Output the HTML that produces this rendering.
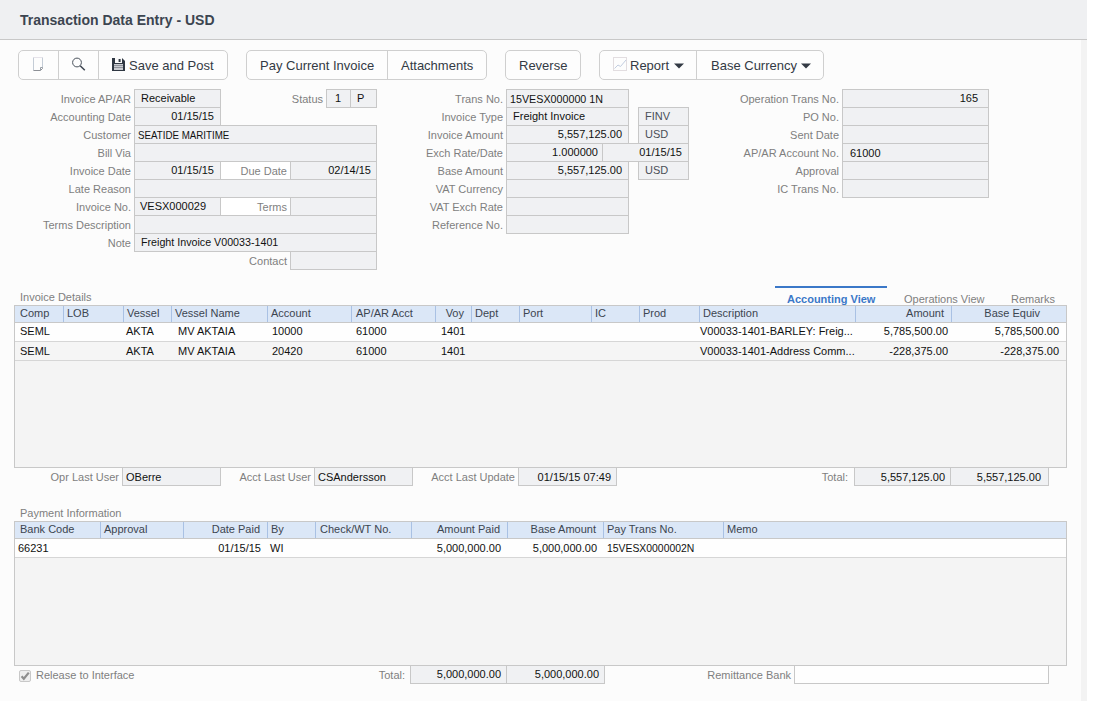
<!DOCTYPE html>
<html><head><meta charset="utf-8"><style>
html,body{margin:0;padding:0;}
body{width:1093px;height:701px;position:relative;overflow:hidden;background:#fcfcfc;font-family:"Liberation Sans",sans-serif;}
.b{position:absolute;box-sizing:border-box;border:1px solid #c8c8c8;}
.t{position:absolute;white-space:nowrap;line-height:17px;height:17px;}
.btn{position:absolute;box-sizing:border-box;border:1px solid #cfcfcf;border-radius:5px;background:#fdfdfd;}
</style></head><body>
<div style="position:absolute;left:0;top:0;width:1087px;height:39px;background:#eff0f2;"></div>
<div style="position:absolute;left:0;top:39px;width:1087px;height:1px;background:#c8c8c8;"></div>
<div style="position:absolute;left:1081px;top:40px;width:6px;height:661px;background:#f3f3f3;"></div>
<div style="position:absolute;left:1087px;top:0px;width:6px;height:701px;background:#ffffff;"></div>
<div class="t" style="left:20px;top:12px;color:#3c4550;font-size:14px;font-weight:bold;">Transaction Data Entry - USD</div>
<div class="btn" style="left:18px;top:50px;width:210px;height:30px;"></div>
<div style="position:absolute;left:58px;top:51px;width:1px;height:28px;background:#cfcfcf"></div>
<div style="position:absolute;left:98px;top:51px;width:1px;height:28px;background:#cfcfcf"></div>
<div class="btn" style="left:246px;top:50px;width:241px;height:30px;"></div>
<div style="position:absolute;left:387px;top:51px;width:1px;height:28px;background:#cfcfcf"></div>
<div class="btn" style="left:505px;top:50px;width:76px;height:30px;"></div>
<div class="btn" style="left:599px;top:50px;width:225px;height:30px;"></div>
<div style="position:absolute;left:696px;top:51px;width:1px;height:28px;background:#cfcfcf"></div>
<div class="t" style="left:129px;top:57px;color:#333a44;font-size:13px;">Save and Post</div>
<div class="t" style="left:260px;top:57px;color:#333a44;font-size:13px;">Pay Current Invoice</div>
<div class="t" style="left:401px;top:57px;color:#333a44;font-size:13px;">Attachments</div>
<div class="t" style="left:519px;top:57px;color:#333a44;font-size:13px;">Reverse</div>
<div class="t" style="left:630px;top:57px;color:#333a44;font-size:13px;">Report</div>
<div class="t" style="left:711px;top:57px;color:#333a44;font-size:13px;">Base Currency</div>
<svg style="position:absolute;left:0;top:0" width="1093" height="90">
<path d="M33.5 70.5 V57.5 H42.5 V67.5" fill="none" stroke="#c4ccd6" stroke-width="1"/>
<path d="M33.5 57.5 H42.5" fill="none" stroke="#e6e3ea" stroke-width="1"/>
<path d="M33.5 70.5 H40.5 L42.5 68.5 V67.5" fill="none" stroke="#8d9096" stroke-width="1"/>
<path d="M40.5 70.5 V67.5 H42.5" fill="none" stroke="#9aa0a8" stroke-width="1"/>
<circle cx="77" cy="62.5" r="4.4" fill="none" stroke="#4a525c" stroke-width="1"/>
<path d="M80.2 65.7 L84.8 70.3" stroke="#3d4550" stroke-width="1.5"/>
<path d="M112 58 H122 L125 61 V71 H112 Z" fill="#2f3742"/>
<rect x="115" y="58" width="7" height="5" fill="#fafafa"/>
<rect x="118.6" y="59" width="2" height="3" fill="#2f3742"/>
<rect x="114" y="64" width="9" height="6" fill="#c9cbd0"/>
<rect x="114" y="65" width="9" height="1" fill="#8f939b"/>
<rect x="114" y="67" width="9" height="1" fill="#8f939b"/>
<rect x="613.5" y="57.5" width="13" height="13" fill="none" stroke="#e2dde0" stroke-width="1"/>
<path d="M614.5 68.5 L618 65 L620.5 66.5 L626 60" fill="none" stroke="#c2cde0" stroke-width="1"/>
<path d="M674 63.5 H684 L679 68.5 Z" fill="#333a44"/>
<path d="M801 63.5 H811 L806 68.5 Z" fill="#333a44"/>
</svg>
<div class="b" style="left:134px;top:89px;width:87px;height:19px;background:#f0f1f3;border-color:#c8c8c8;"></div>
<div class="t" style="left:141px;top:90px;color:#111;font-size:11px;font-weight:normal;">Receivable</div>
<div class="t" style="right:962px;top:91px;color:#7f7f7f;font-size:11px;font-weight:normal;text-align:right;">Invoice AP/AR</div>
<div class="b" style="left:326px;top:89px;width:25px;height:19px;background:#f0f1f3;border-color:#c8c8c8;"></div>
<div class="b" style="left:350px;top:89px;width:27px;height:19px;background:#f0f1f3;border-color:#c8c8c8;"></div>
<div class="t" style="left:335px;top:90px;color:#111;font-size:11px;font-weight:normal;">1</div>
<div class="t" style="left:357px;top:90px;color:#111;font-size:11px;font-weight:normal;">P</div>
<div class="t" style="right:770px;top:91px;color:#7f7f7f;font-size:11px;font-weight:normal;text-align:right;">Status</div>
<div class="b" style="left:134px;top:107px;width:87px;height:19px;background:#f0f1f3;border-color:#c8c8c8;"></div>
<div class="t" style="right:879px;top:108px;color:#111;font-size:11px;font-weight:normal;text-align:right;">01/15/15</div>
<div class="t" style="right:962px;top:109px;color:#7f7f7f;font-size:11px;font-weight:normal;text-align:right;">Accounting Date</div>
<div class="b" style="left:134px;top:125px;width:243px;height:19px;background:#f0f1f3;border-color:#c8c8c8;"></div>
<div class="t" style="left:138px;top:127px;color:#111;font-size:11px;font-weight:normal;"><span style="display:inline-block;transform:scaleX(0.885);transform-origin:0 0">SEATIDE MARITIME</span></div>
<div class="t" style="right:962px;top:127px;color:#7f7f7f;font-size:11px;font-weight:normal;text-align:right;">Customer</div>
<div class="b" style="left:134px;top:143px;width:243px;height:19px;background:#f0f1f3;border-color:#c8c8c8;"></div>
<div class="t" style="right:962px;top:145px;color:#7f7f7f;font-size:11px;font-weight:normal;text-align:right;">Bill Via</div>
<div class="b" style="left:134px;top:161px;width:87px;height:19px;background:#f0f1f3;border-color:#c8c8c8;"></div>
<div class="t" style="right:879px;top:162px;color:#111;font-size:11px;font-weight:normal;text-align:right;">01/15/15</div>
<div class="t" style="right:962px;top:163px;color:#7f7f7f;font-size:11px;font-weight:normal;text-align:right;">Invoice Date</div>
<div class="b" style="left:220px;top:161px;width:71px;height:19px;background:#ffffff;border-color:#c8c8c8;"></div>
<div class="t" style="right:806px;top:163px;color:#7f7f7f;font-size:11px;font-weight:normal;text-align:right;">Due Date</div>
<div class="b" style="left:290px;top:161px;width:87px;height:19px;background:#f0f1f3;border-color:#c8c8c8;"></div>
<div class="t" style="right:722px;top:162px;color:#111;font-size:11px;font-weight:normal;text-align:right;">02/14/15</div>
<div class="b" style="left:134px;top:179px;width:243px;height:19px;background:#f0f1f3;border-color:#c8c8c8;"></div>
<div class="t" style="right:962px;top:181px;color:#7f7f7f;font-size:11px;font-weight:normal;text-align:right;">Late Reason</div>
<div class="b" style="left:134px;top:197px;width:87px;height:19px;background:#f0f1f3;border-color:#c8c8c8;"></div>
<div class="t" style="left:140px;top:198px;color:#111;font-size:11px;font-weight:normal;">VESX000029</div>
<div class="t" style="right:962px;top:199px;color:#7f7f7f;font-size:11px;font-weight:normal;text-align:right;">Invoice No.</div>
<div class="b" style="left:220px;top:197px;width:71px;height:19px;background:#ffffff;border-color:#c8c8c8;"></div>
<div class="t" style="right:806px;top:199px;color:#7f7f7f;font-size:11px;font-weight:normal;text-align:right;">Terms</div>
<div class="b" style="left:290px;top:197px;width:87px;height:19px;background:#f0f1f3;border-color:#c8c8c8;"></div>
<div class="b" style="left:134px;top:215px;width:243px;height:19px;background:#f0f1f3;border-color:#c8c8c8;"></div>
<div class="t" style="right:962px;top:217px;color:#7f7f7f;font-size:11px;font-weight:normal;text-align:right;">Terms Description</div>
<div class="b" style="left:134px;top:233px;width:243px;height:19px;background:#f0f1f3;border-color:#c8c8c8;"></div>
<div class="t" style="left:141px;top:234px;color:#111;font-size:11px;font-weight:normal;"><span style="display:inline-block;transform:scaleX(0.972);transform-origin:0 0">Freight Invoice V00033-1401</span></div>
<div class="t" style="right:962px;top:235px;color:#7f7f7f;font-size:11px;font-weight:normal;text-align:right;">Note</div>
<div class="b" style="left:290px;top:251px;width:87px;height:19px;background:#f0f1f3;border-color:#c8c8c8;"></div>
<div class="t" style="right:806px;top:253px;color:#7f7f7f;font-size:11px;font-weight:normal;text-align:right;">Contact</div>
<div class="b" style="left:506px;top:89px;width:123px;height:19px;background:#f0f1f3;border-color:#c8c8c8;"></div>
<div class="t" style="left:510px;top:91px;color:#111;font-size:11px;font-weight:normal;"><span style="display:inline-block;transform:scaleX(0.975);transform-origin:0 0">15VESX000000 1N</span></div>
<div class="t" style="right:590px;top:91px;color:#7f7f7f;font-size:11px;font-weight:normal;text-align:right;">Trans No.</div>
<div class="b" style="left:506px;top:107px;width:123px;height:19px;background:#f0f1f3;border-color:#c8c8c8;"></div>
<div class="t" style="left:513px;top:108px;color:#111;font-size:11px;font-weight:normal;">Freight Invoice</div>
<div class="t" style="right:590px;top:109px;color:#7f7f7f;font-size:11px;font-weight:normal;text-align:right;">Invoice Type</div>
<div class="b" style="left:638px;top:107px;width:51px;height:19px;background:#f0f1f3;border-color:#c8c8c8;"></div>
<div class="t" style="left:645px;top:108px;color:#4a4f57;font-size:11px;font-weight:normal;">FINV</div>
<div class="b" style="left:506px;top:125px;width:123px;height:19px;background:#f0f1f3;border-color:#c8c8c8;"></div>
<div class="t" style="right:471px;top:126px;color:#111;font-size:11px;font-weight:normal;text-align:right;">5,557,125.00</div>
<div class="t" style="right:590px;top:127px;color:#7f7f7f;font-size:11px;font-weight:normal;text-align:right;">Invoice Amount</div>
<div class="b" style="left:638px;top:125px;width:51px;height:19px;background:#f0f1f3;border-color:#c8c8c8;"></div>
<div class="t" style="left:645px;top:126px;color:#4a4f57;font-size:11px;font-weight:normal;">USD</div>
<div class="b" style="left:506px;top:143px;width:97px;height:19px;background:#f0f1f3;border-color:#c8c8c8;"></div>
<div class="t" style="right:495px;top:144px;color:#111;font-size:11px;font-weight:normal;text-align:right;">1.000000</div>
<div class="t" style="right:590px;top:145px;color:#7f7f7f;font-size:11px;font-weight:normal;text-align:right;">Exch Rate/Date</div>
<div class="b" style="left:602px;top:143px;width:87px;height:19px;background:#f0f1f3;border-color:#c8c8c8;"></div>
<div class="t" style="right:411px;top:144px;color:#111;font-size:11px;font-weight:normal;text-align:right;">01/15/15</div>
<div class="b" style="left:506px;top:161px;width:123px;height:19px;background:#f0f1f3;border-color:#c8c8c8;"></div>
<div class="t" style="right:471px;top:162px;color:#111;font-size:11px;font-weight:normal;text-align:right;">5,557,125.00</div>
<div class="t" style="right:590px;top:163px;color:#7f7f7f;font-size:11px;font-weight:normal;text-align:right;">Base Amount</div>
<div class="b" style="left:638px;top:161px;width:51px;height:19px;background:#f0f1f3;border-color:#c8c8c8;"></div>
<div class="t" style="left:645px;top:162px;color:#4a4f57;font-size:11px;font-weight:normal;">USD</div>
<div class="b" style="left:506px;top:179px;width:123px;height:19px;background:#f0f1f3;border-color:#c8c8c8;"></div>
<div class="t" style="right:590px;top:181px;color:#7f7f7f;font-size:11px;font-weight:normal;text-align:right;">VAT Currency</div>
<div class="b" style="left:506px;top:197px;width:123px;height:19px;background:#f0f1f3;border-color:#c8c8c8;"></div>
<div class="t" style="right:590px;top:199px;color:#7f7f7f;font-size:11px;font-weight:normal;text-align:right;">VAT Exch Rate</div>
<div class="b" style="left:506px;top:215px;width:123px;height:19px;background:#f0f1f3;border-color:#c8c8c8;"></div>
<div class="t" style="right:590px;top:217px;color:#7f7f7f;font-size:11px;font-weight:normal;text-align:right;">Reference No.</div>
<div class="b" style="left:842px;top:89px;width:147px;height:19px;background:#f0f1f3;border-color:#c8c8c8;"></div>
<div class="t" style="right:115px;top:90px;color:#111;font-size:11px;font-weight:normal;text-align:right;">165</div>
<div class="t" style="right:254px;top:91px;color:#7f7f7f;font-size:11px;font-weight:normal;text-align:right;">Operation Trans No.</div>
<div class="b" style="left:842px;top:107px;width:147px;height:19px;background:#f0f1f3;border-color:#c8c8c8;"></div>
<div class="t" style="right:254px;top:109px;color:#7f7f7f;font-size:11px;font-weight:normal;text-align:right;">PO No.</div>
<div class="b" style="left:842px;top:125px;width:147px;height:19px;background:#f0f1f3;border-color:#c8c8c8;"></div>
<div class="t" style="right:254px;top:127px;color:#7f7f7f;font-size:11px;font-weight:normal;text-align:right;">Sent Date</div>
<div class="b" style="left:842px;top:143px;width:147px;height:19px;background:#f0f1f3;border-color:#c8c8c8;"></div>
<div class="t" style="left:850px;top:145px;color:#111;font-size:11px;font-weight:normal;">61000</div>
<div class="t" style="right:254px;top:145px;color:#7f7f7f;font-size:11px;font-weight:normal;text-align:right;">AP/AR Account No.</div>
<div class="b" style="left:842px;top:161px;width:147px;height:19px;background:#f0f1f3;border-color:#c8c8c8;"></div>
<div class="t" style="right:254px;top:163px;color:#7f7f7f;font-size:11px;font-weight:normal;text-align:right;">Approval</div>
<div class="b" style="left:842px;top:179px;width:147px;height:19px;background:#f0f1f3;border-color:#c8c8c8;"></div>
<div class="t" style="right:254px;top:181px;color:#7f7f7f;font-size:11px;font-weight:normal;text-align:right;">IC Trans No.</div>
<div class="t" style="left:20px;top:289px;color:#7f7f7f;font-size:11px;font-weight:normal;">Invoice Details</div>
<div style="position:absolute;left:775px;top:286px;width:112px;height:2px;background:#3b78c8"></div>
<div class="t" style="left:787px;top:291px;color:#3b78c8;font-size:11px;font-weight:bold;">Accounting View</div>
<div class="t" style="left:904px;top:291px;color:#7f7f7f;font-size:11px;font-weight:normal;">Operations View</div>
<div class="t" style="left:1011px;top:291px;color:#7f7f7f;font-size:11px;font-weight:normal;">Remarks</div>
<div class="b" style="left:14px;top:305px;width:1053px;height:163px;background:#f4f4f4;border-color:#c8c8c8"></div>
<div style="position:absolute;left:15px;top:306px;width:1051px;height:16px;background:#dbe7f7"></div>
<div style="position:absolute;left:15px;top:322px;width:1051px;height:1px;background:#c8c8c8"></div>
<div style="position:absolute;left:63px;top:306px;width:1px;height:16px;background:#a9c1e4"></div>
<div style="position:absolute;left:123px;top:306px;width:1px;height:16px;background:#a9c1e4"></div>
<div style="position:absolute;left:171px;top:306px;width:1px;height:16px;background:#a9c1e4"></div>
<div style="position:absolute;left:267px;top:306px;width:1px;height:16px;background:#a9c1e4"></div>
<div style="position:absolute;left:351px;top:306px;width:1px;height:16px;background:#a9c1e4"></div>
<div style="position:absolute;left:435px;top:306px;width:1px;height:16px;background:#a9c1e4"></div>
<div style="position:absolute;left:471px;top:306px;width:1px;height:16px;background:#a9c1e4"></div>
<div style="position:absolute;left:519px;top:306px;width:1px;height:16px;background:#a9c1e4"></div>
<div style="position:absolute;left:591px;top:306px;width:1px;height:16px;background:#a9c1e4"></div>
<div style="position:absolute;left:639px;top:306px;width:1px;height:16px;background:#a9c1e4"></div>
<div style="position:absolute;left:699px;top:306px;width:1px;height:16px;background:#a9c1e4"></div>
<div style="position:absolute;left:855px;top:306px;width:1px;height:16px;background:#a9c1e4"></div>
<div style="position:absolute;left:951px;top:306px;width:1px;height:16px;background:#a9c1e4"></div>
<div style="position:absolute;left:15px;top:323px;width:1051px;height:18px;background:#fefefe"></div>
<div style="position:absolute;left:15px;top:341px;width:1051px;height:1px;background:#d6d6d6"></div>
<div style="position:absolute;left:15px;top:342px;width:1051px;height:18px;background:#f5f5f5"></div>
<div style="position:absolute;left:15px;top:360px;width:1051px;height:1px;background:#d6d6d6"></div>
<div class="t" style="left:20px;top:305px;color:#3c4550;font-size:11px;font-weight:normal;">Comp</div>
<div class="t" style="left:67px;top:305px;color:#3c4550;font-size:11px;font-weight:normal;">LOB</div>
<div class="t" style="left:127px;top:305px;color:#3c4550;font-size:11px;font-weight:normal;">Vessel</div>
<div class="t" style="left:175px;top:305px;color:#3c4550;font-size:11px;font-weight:normal;">Vessel Name</div>
<div class="t" style="left:271px;top:305px;color:#3c4550;font-size:11px;font-weight:normal;">Account</div>
<div class="t" style="left:356px;top:305px;color:#3c4550;font-size:11px;font-weight:normal;">AP/AR Acct</div>
<div class="t" style="left:475px;top:305px;color:#3c4550;font-size:11px;font-weight:normal;">Dept</div>
<div class="t" style="left:523px;top:305px;color:#3c4550;font-size:11px;font-weight:normal;">Port</div>
<div class="t" style="left:595px;top:305px;color:#3c4550;font-size:11px;font-weight:normal;">IC</div>
<div class="t" style="left:643px;top:305px;color:#3c4550;font-size:11px;font-weight:normal;">Prod</div>
<div class="t" style="left:703px;top:305px;color:#3c4550;font-size:11px;font-weight:normal;">Description</div>
<div class="t" style="right:629px;top:305px;color:#3c4550;font-size:11px;font-weight:normal;text-align:right;">Voy</div>
<div class="t" style="right:149px;top:305px;color:#3c4550;font-size:11px;font-weight:normal;text-align:right;">Amount</div>
<div class="t" style="right:53px;top:305px;color:#3c4550;font-size:11px;font-weight:normal;text-align:right;">Base Equiv</div>
<div class="t" style="left:20px;top:323px;color:#111;font-size:11px;font-weight:normal;">SEML</div>
<div class="t" style="left:126px;top:323px;color:#111;font-size:11px;font-weight:normal;">AKTA</div>
<div class="t" style="left:178px;top:323px;color:#111;font-size:11px;font-weight:normal;">MV AKTAIA</div>
<div class="t" style="left:272px;top:323px;color:#111;font-size:11px;font-weight:normal;">10000</div>
<div class="t" style="left:356px;top:323px;color:#111;font-size:11px;font-weight:normal;">61000</div>
<div class="t" style="left:441px;top:323px;color:#111;font-size:11px;font-weight:normal;">1401</div>
<div class="t" style="left:700px;top:323px;color:#111;font-size:11px;font-weight:normal;">V00033-1401-BARLEY: Freig...</div>
<div class="t" style="right:145px;top:323px;color:#111;font-size:11px;font-weight:normal;text-align:right;">5,785,500.00</div>
<div class="t" style="right:34px;top:323px;color:#111;font-size:11px;font-weight:normal;text-align:right;">5,785,500.00</div>
<div class="t" style="left:20px;top:343px;color:#111;font-size:11px;font-weight:normal;">SEML</div>
<div class="t" style="left:126px;top:343px;color:#111;font-size:11px;font-weight:normal;">AKTA</div>
<div class="t" style="left:178px;top:343px;color:#111;font-size:11px;font-weight:normal;">MV AKTAIA</div>
<div class="t" style="left:272px;top:343px;color:#111;font-size:11px;font-weight:normal;">20420</div>
<div class="t" style="left:356px;top:343px;color:#111;font-size:11px;font-weight:normal;">61000</div>
<div class="t" style="left:441px;top:343px;color:#111;font-size:11px;font-weight:normal;">1401</div>
<div class="t" style="left:700px;top:343px;color:#111;font-size:11px;font-weight:normal;">V00033-1401-Address Comm...</div>
<div class="t" style="right:145px;top:343px;color:#111;font-size:11px;font-weight:normal;text-align:right;">-228,375.00</div>
<div class="t" style="right:34px;top:343px;color:#111;font-size:11px;font-weight:normal;text-align:right;">-228,375.00</div>
<div class="b" style="left:122px;top:467px;width:99px;height:19px;background:#f0f1f3;border-color:#c8c8c8;"></div>
<div class="t" style="left:126px;top:469px;color:#111;font-size:11px;font-weight:normal;">OBerre</div>
<div class="t" style="right:974px;top:469px;color:#7f7f7f;font-size:11px;font-weight:normal;text-align:right;">Opr Last User</div>
<div class="b" style="left:314px;top:467px;width:99px;height:19px;background:#f0f1f3;border-color:#c8c8c8;"></div>
<div class="t" style="left:318px;top:469px;color:#111;font-size:11px;font-weight:normal;">CSAndersson</div>
<div class="t" style="right:782px;top:469px;color:#7f7f7f;font-size:11px;font-weight:normal;text-align:right;">Acct Last User</div>
<div class="b" style="left:518px;top:467px;width:99px;height:19px;background:#f0f1f3;border-color:#c8c8c8;"></div>
<div class="t" style="right:482px;top:469px;color:#111;font-size:11px;font-weight:normal;text-align:right;">01/15/15 07:49</div>
<div class="t" style="right:578px;top:469px;color:#7f7f7f;font-size:11px;font-weight:normal;text-align:right;">Acct Last Update</div>
<div class="b" style="left:854px;top:467px;width:97px;height:19px;background:#f0f1f3;border-color:#c8c8c8;"></div>
<div class="t" style="right:148px;top:469px;color:#111;font-size:11px;font-weight:normal;text-align:right;">5,557,125.00</div>
<div class="t" style="right:245px;top:469px;color:#7f7f7f;font-size:11px;font-weight:normal;text-align:right;">Total:</div>
<div class="b" style="left:950px;top:467px;width:99px;height:19px;background:#f0f1f3;border-color:#c8c8c8;"></div>
<div class="t" style="right:52px;top:469px;color:#111;font-size:11px;font-weight:normal;text-align:right;">5,557,125.00</div>
<div class="t" style="left:20px;top:505px;color:#7f7f7f;font-size:11px;font-weight:normal;">Payment Information</div>
<div class="b" style="left:14px;top:521px;width:1053px;height:145px;background:#f4f4f4;border-color:#c8c8c8"></div>
<div style="position:absolute;left:15px;top:522px;width:1051px;height:16px;background:#dbe7f7"></div>
<div style="position:absolute;left:15px;top:538px;width:1051px;height:1px;background:#c8c8c8"></div>
<div style="position:absolute;left:100px;top:522px;width:1px;height:16px;background:#a9c1e4"></div>
<div style="position:absolute;left:183px;top:522px;width:1px;height:16px;background:#a9c1e4"></div>
<div style="position:absolute;left:267px;top:522px;width:1px;height:16px;background:#a9c1e4"></div>
<div style="position:absolute;left:315px;top:522px;width:1px;height:16px;background:#a9c1e4"></div>
<div style="position:absolute;left:411px;top:522px;width:1px;height:16px;background:#a9c1e4"></div>
<div style="position:absolute;left:507px;top:522px;width:1px;height:16px;background:#a9c1e4"></div>
<div style="position:absolute;left:603px;top:522px;width:1px;height:16px;background:#a9c1e4"></div>
<div style="position:absolute;left:723px;top:522px;width:1px;height:16px;background:#a9c1e4"></div>
<div style="position:absolute;left:15px;top:539px;width:1051px;height:18px;background:#fefefe"></div>
<div style="position:absolute;left:15px;top:557px;width:1051px;height:1px;background:#d6d6d6"></div>
<div class="t" style="left:20px;top:521px;color:#3c4550;font-size:11px;font-weight:normal;">Bank Code</div>
<div class="t" style="left:104px;top:521px;color:#3c4550;font-size:11px;font-weight:normal;">Approval</div>
<div class="t" style="left:271px;top:521px;color:#3c4550;font-size:11px;font-weight:normal;">By</div>
<div class="t" style="left:320px;top:521px;color:#3c4550;font-size:11px;font-weight:normal;">Check/WT No.</div>
<div class="t" style="left:607px;top:521px;color:#3c4550;font-size:11px;font-weight:normal;">Pay Trans No.</div>
<div class="t" style="left:727px;top:521px;color:#3c4550;font-size:11px;font-weight:normal;">Memo</div>
<div class="t" style="right:833px;top:521px;color:#3c4550;font-size:11px;font-weight:normal;text-align:right;">Date Paid</div>
<div class="t" style="right:593px;top:521px;color:#3c4550;font-size:11px;font-weight:normal;text-align:right;">Amount Paid</div>
<div class="t" style="right:497px;top:521px;color:#3c4550;font-size:11px;font-weight:normal;text-align:right;">Base Amount</div>
<div class="t" style="left:18px;top:540px;color:#111;font-size:11px;font-weight:normal;">66231</div>
<div class="t" style="right:832px;top:540px;color:#111;font-size:11px;font-weight:normal;text-align:right;">01/15/15</div>
<div class="t" style="left:270px;top:540px;color:#111;font-size:11px;font-weight:normal;">WI</div>
<div class="t" style="right:592px;top:540px;color:#111;font-size:11px;font-weight:normal;text-align:right;">5,000,000.00</div>
<div class="t" style="right:496px;top:540px;color:#111;font-size:11px;font-weight:normal;text-align:right;">5,000,000.00</div>
<div class="t" style="left:607px;top:540px;color:#111;font-size:11px;font-weight:normal;"><span style="display:inline-block;transform:scaleX(0.945);transform-origin:0 0">15VESX0000002N</span></div>
<div class="b" style="left:19px;top:670px;width:12px;height:12px;background:#eeeeee;border-color:#c8c8c8;border-radius:2px"></div>
<svg style="position:absolute;left:19px;top:670px" width="12" height="12"><path d="M2.6 6.3 L4.8 8.8 L9.8 2.6" fill="none" stroke="#8e8e8e" stroke-width="2.2"/></svg>
<div class="t" style="left:36px;top:667px;color:#7f7f7f;font-size:11px;font-weight:normal;">Release to Interface</div>
<div class="b" style="left:410px;top:665px;width:97px;height:19px;background:#f0f1f3;border-color:#c8c8c8;"></div>
<div class="t" style="right:592px;top:666px;color:#111;font-size:11px;font-weight:normal;text-align:right;">5,000,000.00</div>
<div class="t" style="right:688px;top:667px;color:#7f7f7f;font-size:11px;font-weight:normal;text-align:right;">Total:</div>
<div class="b" style="left:506px;top:665px;width:99px;height:19px;background:#f0f1f3;border-color:#c8c8c8;"></div>
<div class="t" style="right:494px;top:666px;color:#111;font-size:11px;font-weight:normal;text-align:right;">5,000,000.00</div>
<div class="b" style="left:794px;top:665px;width:255px;height:19px;background:#fefefe;border-color:#c8c8c8;"></div>
<div class="t" style="right:302px;top:667px;color:#7f7f7f;font-size:11px;font-weight:normal;text-align:right;">Remittance Bank</div>
</body></html>
